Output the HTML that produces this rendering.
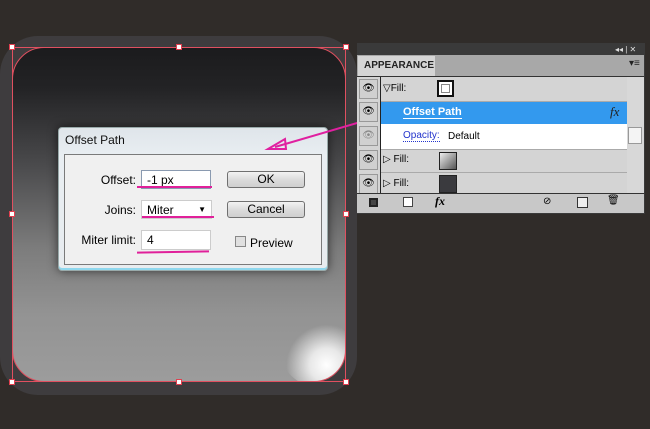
<!DOCTYPE html><html><head><style>
body{margin:0;width:650px;height:429px;background:#302c29;position:relative;overflow:hidden;font-family:"Liberation Sans",sans-serif}
.a{position:absolute}
.h{position:absolute;width:6px;height:6px;background:#fff;border:1px solid #e04050;box-sizing:border-box}
.eye{position:absolute;left:359px;width:19px;height:20px;background:#d0d0d0;border:1px solid #999;box-sizing:border-box;font-size:10px;text-align:center;line-height:18px}
.inp{position:absolute;background:#fff;border:1px solid #8a9ab0;box-sizing:border-box;font-size:12px;padding-left:5px;line-height:18px}
.btn{position:absolute;width:78px;height:17px;border:1px solid #707070;border-radius:3px;box-sizing:border-box;background:linear-gradient(#f2f2f2,#dcdcdc 50%,#cfcfcf);font-size:12px;text-align:center;line-height:15px}
.lbl{position:absolute;font-size:12px;text-align:right;width:80px}
.ul{position:absolute;height:2px;background:#e0209a}
</style></head><body>
<div class="a" style="left:0;top:36px;width:357px;height:359px;border-radius:38px;background:#3e3c3e"></div>
<div class="a" style="left:12px;top:47px;width:334px;height:335px;border-radius:32px;background:linear-gradient(#1b1b1d 0%,#232325 12%,#4a4a4c 35%,#7c7c7c 60%,#939393 80%,#9c9c9c);border:1px solid #e05060;box-sizing:border-box;overflow:hidden">
<div class="a" style="left:268px;top:268px;width:70px;height:70px;border-radius:50%;background:radial-gradient(circle at 65% 70%,#fff 0%,#e8e8e8 25%,rgba(170,170,170,0) 60%)"></div></div>
<div class="a" style="left:12px;top:47px;width:334px;height:335px;border:1px solid #e05060;box-sizing:border-box"></div>
<div class="h" style="left:9px;top:44px"></div><div class="h" style="left:176px;top:44px"></div><div class="h" style="left:343px;top:44px"></div>
<div class="h" style="left:9px;top:211px"></div><div class="h" style="left:343px;top:211px"></div>
<div class="h" style="left:9px;top:379px"></div><div class="h" style="left:176px;top:379px"></div><div class="h" style="left:343px;top:379px"></div>

<div class="a" style="left:58px;top:127px;width:270px;height:144px;border-radius:4px;background:linear-gradient(#dfe5ea,#e9eef2 20%,#e8ecef);border:1px solid #9aa;box-shadow:0 0 10px rgba(0,0,0,.6), inset 0 -2px 0 #8fd8ee;box-sizing:border-box"></div>
<div class="a" style="left:65px;top:133px;font-size:12px;color:#111">Offset Path</div>
<div class="a" style="left:64px;top:154px;width:258px;height:111px;border:1px solid #7a7a7a;background:#f0f0f0;box-sizing:border-box"></div>
<div class="lbl" style="left:56px;top:173px">Offset:</div>
<div class="lbl" style="left:56px;top:203px">Joins:</div>
<div class="lbl" style="left:56px;top:233px">Miter limit:</div>
<div class="inp" style="left:141px;top:170px;width:70px;height:19px">-1 px</div>
<div class="inp" style="left:141px;top:200px;width:71px;height:19px;border-color:#ccc">Miter<span style="position:absolute;right:5px;top:0;font-size:8px">▼</span></div>
<div class="inp" style="left:141px;top:230px;width:70px;height:20px;border-color:#ccc">4</div>
<div class="ul" style="left:137px;top:186px;width:75px"></div>
<div class="ul" style="left:142px;top:216px;width:72px"></div>
<div class="ul" style="left:137px;top:251px;width:72px;transform:rotate(-1deg)"></div>
<div class="btn" style="left:227px;top:171px">OK</div>
<div class="btn" style="left:227px;top:201px">Cancel</div>
<div class="a" style="left:235px;top:236px;width:11px;height:11px;border:1px solid #888;background:#e0e0e0;box-sizing:border-box"></div>
<div class="a" style="left:250px;top:236px;font-size:12px">Preview</div>

<svg class="a" style="left:260px;top:105px" width="150" height="50"><line x1="145" y1="4" x2="15" y2="42" stroke="#e020a0" stroke-width="2"/><path d="M8 44 L25 34 L26 44 Z" fill="none" stroke="#e020a0" stroke-width="2"/></svg>

<div class="a" style="left:357px;top:43px;width:288px;height:171px;background:#3a3a3a"></div>
<div class="a" style="left:615px;top:45px;font-size:8px;color:#ddd">◂◂ | ✕</div>
<div class="a" style="left:357px;top:55px;width:287px;height:21px;background:#a8a8a8"></div>
<div class="a" style="left:358px;top:56px;width:77px;height:20px;background:#d5d5d5;font-size:10px;font-weight:bold;line-height:20px;text-indent:6px;color:#222">APPEARANCE</div>
<div class="a" style="left:629px;top:58px;font-size:10px;color:#222">▾≡</div>
<div class="a" style="left:357px;top:76px;width:287px;height:118px;background:#d4d4d4;border-top:1px solid #333;box-sizing:border-box"></div>
<div class="a" style="left:380px;top:77px;width:1px;height:117px;background:#222"></div>
<div class="a" style="left:381px;top:101px;width:246px;height:23px;background:#3399ee"></div>
<div class="a" style="left:381px;top:124px;width:246px;height:25px;background:#fff"></div>
<div class="a" style="left:381px;top:149px;width:246px;height:1px;background:#aaa"></div>
<div class="a" style="left:381px;top:172px;width:246px;height:1px;background:#aaa"></div>
<div class="a" style="left:381px;top:101px;width:246px;height:1px;background:#aaa"></div>
<div class="eye" style="top:79px">👁</div><div class="eye" style="top:102px">👁</div><div class="eye" style="top:126px;color:#888">👁</div><div class="eye" style="top:150px">👁</div><div class="eye" style="top:174px">👁</div>
<div class="a" style="left:383px;top:83px;font-size:10px">▽Fill:</div>
<div class="a" style="left:437px;top:80px;width:17px;height:17px;border:2px solid #111;background:#fff;box-sizing:border-box;outline:1px solid #888;outline-offset:-5px"></div>
<div class="a" style="left:403px;top:106px;font-size:11px;font-weight:bold;color:#fff;border-bottom:1px solid #fff">Offset Path</div>
<div class="a" style="left:610px;top:104px;font-size:13px;font-style:italic;font-family:'Liberation Serif',serif;color:#222">fx</div>
<div class="a" style="left:403px;top:130px;font-size:10px;color:#2233cc;border-bottom:1px dotted #2233cc">Opacity:</div>
<div class="a" style="left:448px;top:131px;font-size:10px">Default</div>
<div class="a" style="left:383px;top:154px;font-size:10px">▷ Fill:</div>
<div class="a" style="left:439px;top:152px;width:16px;height:16px;border:1px solid #222;background:linear-gradient(135deg,#eee,#555)"></div>
<div class="a" style="left:383px;top:178px;font-size:10px">▷ Fill:</div>
<div class="a" style="left:439px;top:175px;width:16px;height:16px;border:1px solid #222;background:#3a3a3e"></div>
<div class="a" style="left:627px;top:77px;width:17px;height:116px;background:#d8d8d8"></div>
<div class="a" style="left:628px;top:127px;width:14px;height:17px;background:#f4f4f4;border:1px solid #999;box-sizing:border-box"></div>
<div class="a" style="left:357px;top:193px;width:287px;height:20px;background:#c8c8c8;border-top:1px solid #333;box-sizing:border-box"></div>
<div class="a" style="left:369px;top:198px;width:9px;height:9px;background:#444;border:2px solid #222;box-sizing:border-box"></div>
<div class="a" style="left:403px;top:197px;width:10px;height:10px;background:#fff;border:1px solid #444;box-sizing:border-box"></div>
<div class="a" style="left:435px;top:194px;font-size:12px;font-style:italic;font-weight:bold;font-family:'Liberation Serif',serif">fx</div>
<div class="a" style="left:543px;top:196px;font-size:10px">⊘</div>
<div class="a" style="left:577px;top:197px;width:9px;height:9px;border:1px solid #333;background:#eee"></div>
<div class="a" style="left:607px;top:195px;font-size:10px">🗑</div>
</body></html>
